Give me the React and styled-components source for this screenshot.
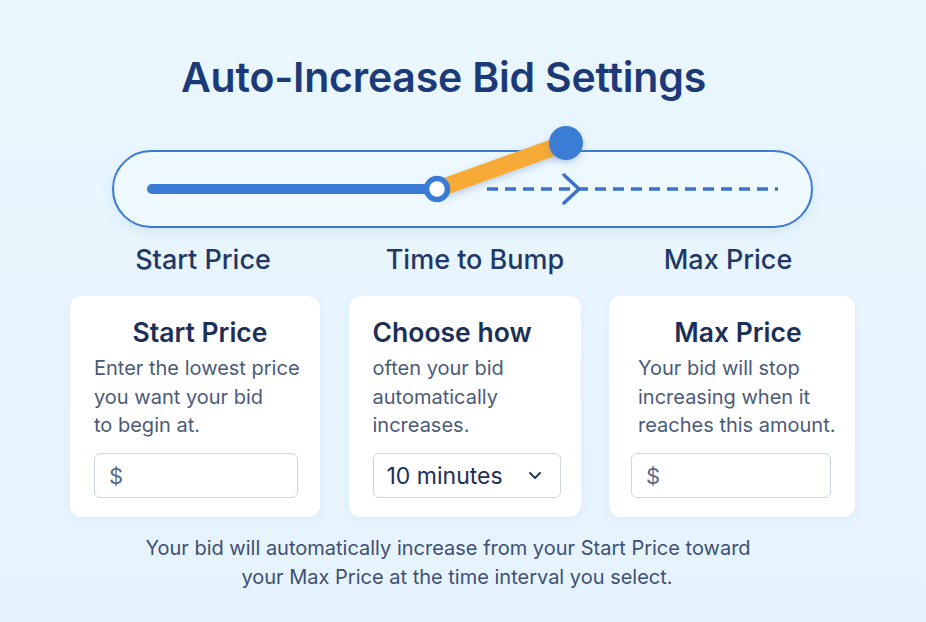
import React from "react";
import styled, { createGlobalStyle } from "styled-components";

const Global = createGlobalStyle`
  html, body { margin: 0; padding: 0; }
  body {
    font-family: Inter, "Noto Sans", "Liberation Sans", sans-serif;
    background: #e9f6fe;
  }
`;

const Page = styled.div`
  width: 926px;
  height: 622px;
  box-sizing: border-box;
  background: linear-gradient(180deg, #eaf7ff 0%, #e7f4fd 60%, #e6f3fc 100%);
  display: flex;
  flex-direction: column;
  padding-top: 52px;
  overflow: hidden;
`;

const Title = styled.h1`
  margin: 0 0 0 -39px;
  text-align: center;
  font-size: 41px;
  line-height: 50px;
  font-weight: 600;
  color: #1d3a78;
  letter-spacing: -0.2px;
`;

const TrackRow = styled.div`
  padding: 48px 0 0 112px;
`;

const Track = styled.div`
  position: relative;
  width: 701px;
  height: 78px;
  box-sizing: border-box;
  border: 2.5px solid #3d7bd3;
  border-radius: 39px;
  background: #edf8ff;
  box-shadow: 0 4px 12px rgba(60, 120, 200, 0.12);
`;

const TrackArt = styled.svg`
  position: absolute;
  left: -2.5px;
  top: -2.5px;
  overflow: visible;
`;

const Labels = styled.div`
  display: grid;
  grid-template-columns: 266px 278px 228px;
  padding-left: 70px;
  margin-top: 15px;
`;

const Label = styled.div`
  text-align: center;
  font-size: 27px;
  line-height: 34px;
  font-weight: 500;
  color: #1f3868;
`;

const Cards = styled.div`
  display: grid;
  grid-template-columns: 250px 232px 246px;
  column-gap: 28.5px;
  padding-left: 70px;
  margin-top: 19px;
`;

const Card = styled.div`
  height: 221px;
  box-sizing: border-box;
  background: #ffffff;
  border-radius: 12px;
  padding: 19px ${(p) => p.$padR}px 0 ${(p) => p.$padL}px;
  display: flex;
  flex-direction: column;
  box-shadow: 0 2px 8px rgba(80, 130, 190, 0.06);
`;

const CardTitle = styled.h2`
  margin: 0 0 5px;
  font-size: 26.5px;
  line-height: 34px;
  font-weight: 600;
  color: #1c2f57;
  white-space: nowrap;
  text-align: ${(p) => (p.$center ? "center" : "left")};
`;

const CardText = styled.p`
  margin: 0 0 0 ${(p) => p.$indent || 0}px;
  font-size: 20px;
  line-height: 28.5px;
  color: #4a5b78;
  white-space: pre-line;
  height: 86px;
`;

const Field = styled.div`
  margin-top: 13px;
  height: 45px;
  box-sizing: border-box;
  border: 1.5px solid #ccd5e0;
  border-radius: 6px;
  display: flex;
  align-items: center;
  justify-content: space-between;
  padding: 0 18px 0 ${(p) => p.$padL || 14}px;
  width: ${(p) => p.$w}px;
`;

const Dollar = styled.span`
  font-size: 22px;
  color: #5a6b88;
`;

const SelectText = styled.span`
  font-size: 23px;
  color: #1c2f57;
`;

const Footer = styled.div`
  margin-top: 17px;
  display: flex;
  flex-direction: column;
  align-items: center;
  font-size: 20px;
  line-height: 29px;
  color: #3e5073;
  padding-right: 30px;
`;

const FooterLine = styled.span`
  margin-left: ${(p) => p.$shift || 0}px;
`;

function TrackDrawing() {
  return (
    <TrackArt width="701" height="78" viewBox="0 0 701 78">
      <defs>
        <filter id="sh" x="-20%" y="-50%" width="140%" height="200%">
          <feDropShadow dx="0" dy="3" stdDeviation="3" floodColor="#2a5aa0" floodOpacity="0.25" />
        </filter>
      </defs>
      <line x1="40" y1="39" x2="322" y2="39" stroke="#3a7bd5" strokeWidth="10" strokeLinecap="round" />
      <line x1="375" y1="39" x2="666" y2="39" stroke="#3a72c8" strokeWidth="3.4" strokeDasharray="11 7" />
      <polyline points="452,25 467,39 452,53" fill="none" stroke="#3a72c8" strokeWidth="3.5" strokeLinecap="round" strokeLinejoin="round" />
      <line x1="326" y1="39" x2="454" y2="-7" stroke="#f7aa34" strokeWidth="17" filter="url(#sh)" />
      <circle cx="325" cy="39" r="10.5" fill="#ffffff" stroke="#3a7bd5" strokeWidth="5.5" />
      <circle cx="454" cy="-7" r="17" fill="#3a7bd5" filter="url(#sh)" />
    </TrackArt>
  );
}

export default function App() {
  return (
    <>
      <Global />
      <Page>
        <Title>Auto-Increase Bid Settings</Title>
        <TrackRow>
          <Track>
            <TrackDrawing />
          </Track>
        </TrackRow>
        <Labels>
          <Label>Start Price</Label>
          <Label>Time to Bump</Label>
          <Label>Max Price</Label>
        </Labels>
        <Cards>
          <Card $padL={24} $padR={14}>
            <CardTitle $center>Start Price</CardTitle>
            <CardText>{"Enter the lowest price\nyou want your bid\nto begin at."}</CardText>
            <Field $w={204}>
              <Dollar>$</Dollar>
            </Field>
          </Card>
          <Card $padL={24} $padR={14}>
            <CardTitle>Choose how</CardTitle>
            <CardText>{"often your bid\nautomatically\nincreases."}</CardText>
            <Field $w={188} $padL={13}>
              <SelectText>10 minutes</SelectText>
              <svg width="14" height="9" viewBox="0 0 14 9">
                <polyline points="2,2 7,7 12,2" fill="none" stroke="#2a3a5a" strokeWidth="2" strokeLinecap="round" strokeLinejoin="round" />
              </svg>
            </Field>
          </Card>
          <Card $padL={22} $padR={10}>
            <CardTitle $center>Max Price</CardTitle>
            <CardText $indent={7}>{"Your bid will stop\nincreasing when it\nreaches this amount."}</CardText>
            <Field $w={200}>
              <Dollar>$</Dollar>
            </Field>
          </Card>
        </Cards>
        <Footer>
          <FooterLine>Your bid will automatically increase from your Start Price toward</FooterLine>
          <FooterLine $shift={18}>your Max Price at the time interval you select.</FooterLine>
        </Footer>
      </Page>
    </>
  );
}
